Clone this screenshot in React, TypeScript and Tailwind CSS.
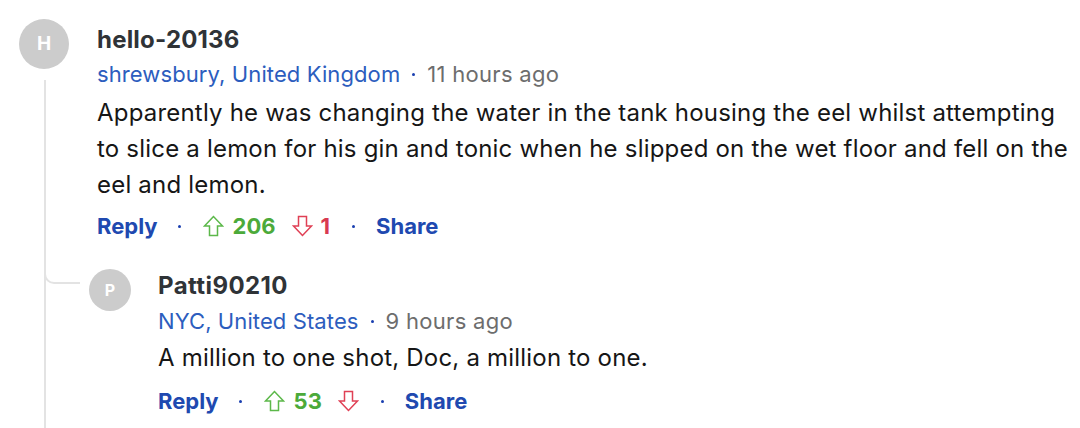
import React from "react";

const font = { fontFamily: "Inter, 'Noto Sans', sans-serif" };

function UpArrow() {
  return (
    <svg width="21" height="22" viewBox="0 0 21 22" fill="none" stroke="#5cb84a" strokeWidth="1.5" strokeLinejoin="miter">
      <path d="M10.5 1.5 L1.5 11 H6.5 V20.5 H14.5 V11 H19.5 Z" />
    </svg>
  );
}

function DownArrow() {
  return (
    <svg width="21" height="22" viewBox="0 0 21 22" fill="none" stroke="#e04055" strokeWidth="1.5" strokeLinejoin="miter">
      <path d="M10.5 20.5 L1.5 11 H6.5 V1.5 H14.5 V11 H19.5 Z" />
    </svg>
  );
}

function Dot() {
  return <span className="inline-block w-[3px] h-[3px] rounded-full bg-[#1a3fb0]" />;
}

export default function App() {
  return (
    <div className="w-[1080px] h-[428px] bg-white overflow-hidden relative" style={font}>
      {/* thread line */}
      <div className="absolute left-[44px] top-[80px] bottom-0 w-[2px] bg-[#e3e3e3]" />
      <div className="absolute left-[44px] top-[262px] w-[36px] h-[22px] border-l-2 border-b-2 border-[#e3e3e3] rounded-bl-[10px]" />
      <div className="flex pt-[19px] pl-[19px]">
        <div className="w-[50px] h-[50px] rounded-full bg-[#cccccc] flex items-center justify-center text-white font-bold text-[19px] shrink-0">H</div>
        <div className="ml-[28px] flex flex-col">
          <div className="text-[24px] font-bold text-[#2f3337] leading-[30px] tracking-[0.2px] mt-[6px]">hello-20136</div>
          <div className="flex items-center text-[22px] leading-[28px] mt-[5px]">
            <span className="text-[#2c5dbe] tracking-[0.1px]">shrewsbury, United Kingdom</span>
            <span className="mx-[12px] inline-flex"><Dot /></span>
            <span className="text-[#6d6d6d] tracking-[0.3px]">11 hours ago</span>
          </div>
          <div className="text-[24px] leading-[36px] tracking-[0.2px] text-[#161616] mt-[7px] w-[976px]">
            Apparently he was changing the water in the tank housing the eel whilst attempting to slice a lemon for his gin and tonic when he slipped on the wet floor and fell on the eel and lemon.
          </div>
          <div className="flex items-center text-[22px] font-bold mt-[9px] leading-[28px]">
            <span className="text-[#2049b0]">Reply</span>
            <span className="ml-[20px] mr-[22px] inline-flex"><Dot /></span>
            <UpArrow />
            <span className="text-[#4caa3a] ml-[9px]">206</span>
            <span className="ml-[16px] inline-flex"><DownArrow /></span>
            <span className="text-[#d83a50] ml-[8px]">1</span>
            <span className="ml-[22px] mr-[21px] inline-flex"><Dot /></span>
            <span className="text-[#2049b0]">Share</span>
          </div>
        </div>
      </div>
      <div className="flex pl-[89px] mt-[29px]">
        <div className="w-[42px] h-[42px] rounded-full bg-[#cccccc] flex items-center justify-center text-white font-bold text-[16px] shrink-0">P</div>
        <div className="ml-[27px] flex flex-col">
          <div className="text-[24px] font-bold text-[#2f3337] leading-[30px] tracking-[0.4px] mt-[2px]">Patti90210</div>
          <div className="flex items-center text-[22px] leading-[28px] mt-[6px]">
            <span className="text-[#2c5dbe] tracking-[0.1px]">NYC, United States</span>
            <span className="mx-[12px] inline-flex"><Dot /></span>
            <span className="text-[#6d6d6d] tracking-[0.3px]">9 hours ago</span>
          </div>
          <div className="text-[24px] leading-[36px] tracking-[0.2px] text-[#161616] mt-[5px]">A million to one shot, Doc, a million to one.</div>
          <div className="flex items-center text-[22px] font-bold mt-[11px] leading-[28px]">
            <span className="text-[#2049b0]">Reply</span>
            <span className="ml-[20px] mr-[22px] inline-flex"><Dot /></span>
            <UpArrow />
            <span className="text-[#4caa3a] ml-[9px]">53</span>
            <span className="ml-[16px] inline-flex"><DownArrow /></span>
            <span className="ml-[22px] mr-[21px] inline-flex"><Dot /></span>
            <span className="text-[#2049b0]">Share</span>
          </div>
        </div>
      </div>
    </div>
  );
}
